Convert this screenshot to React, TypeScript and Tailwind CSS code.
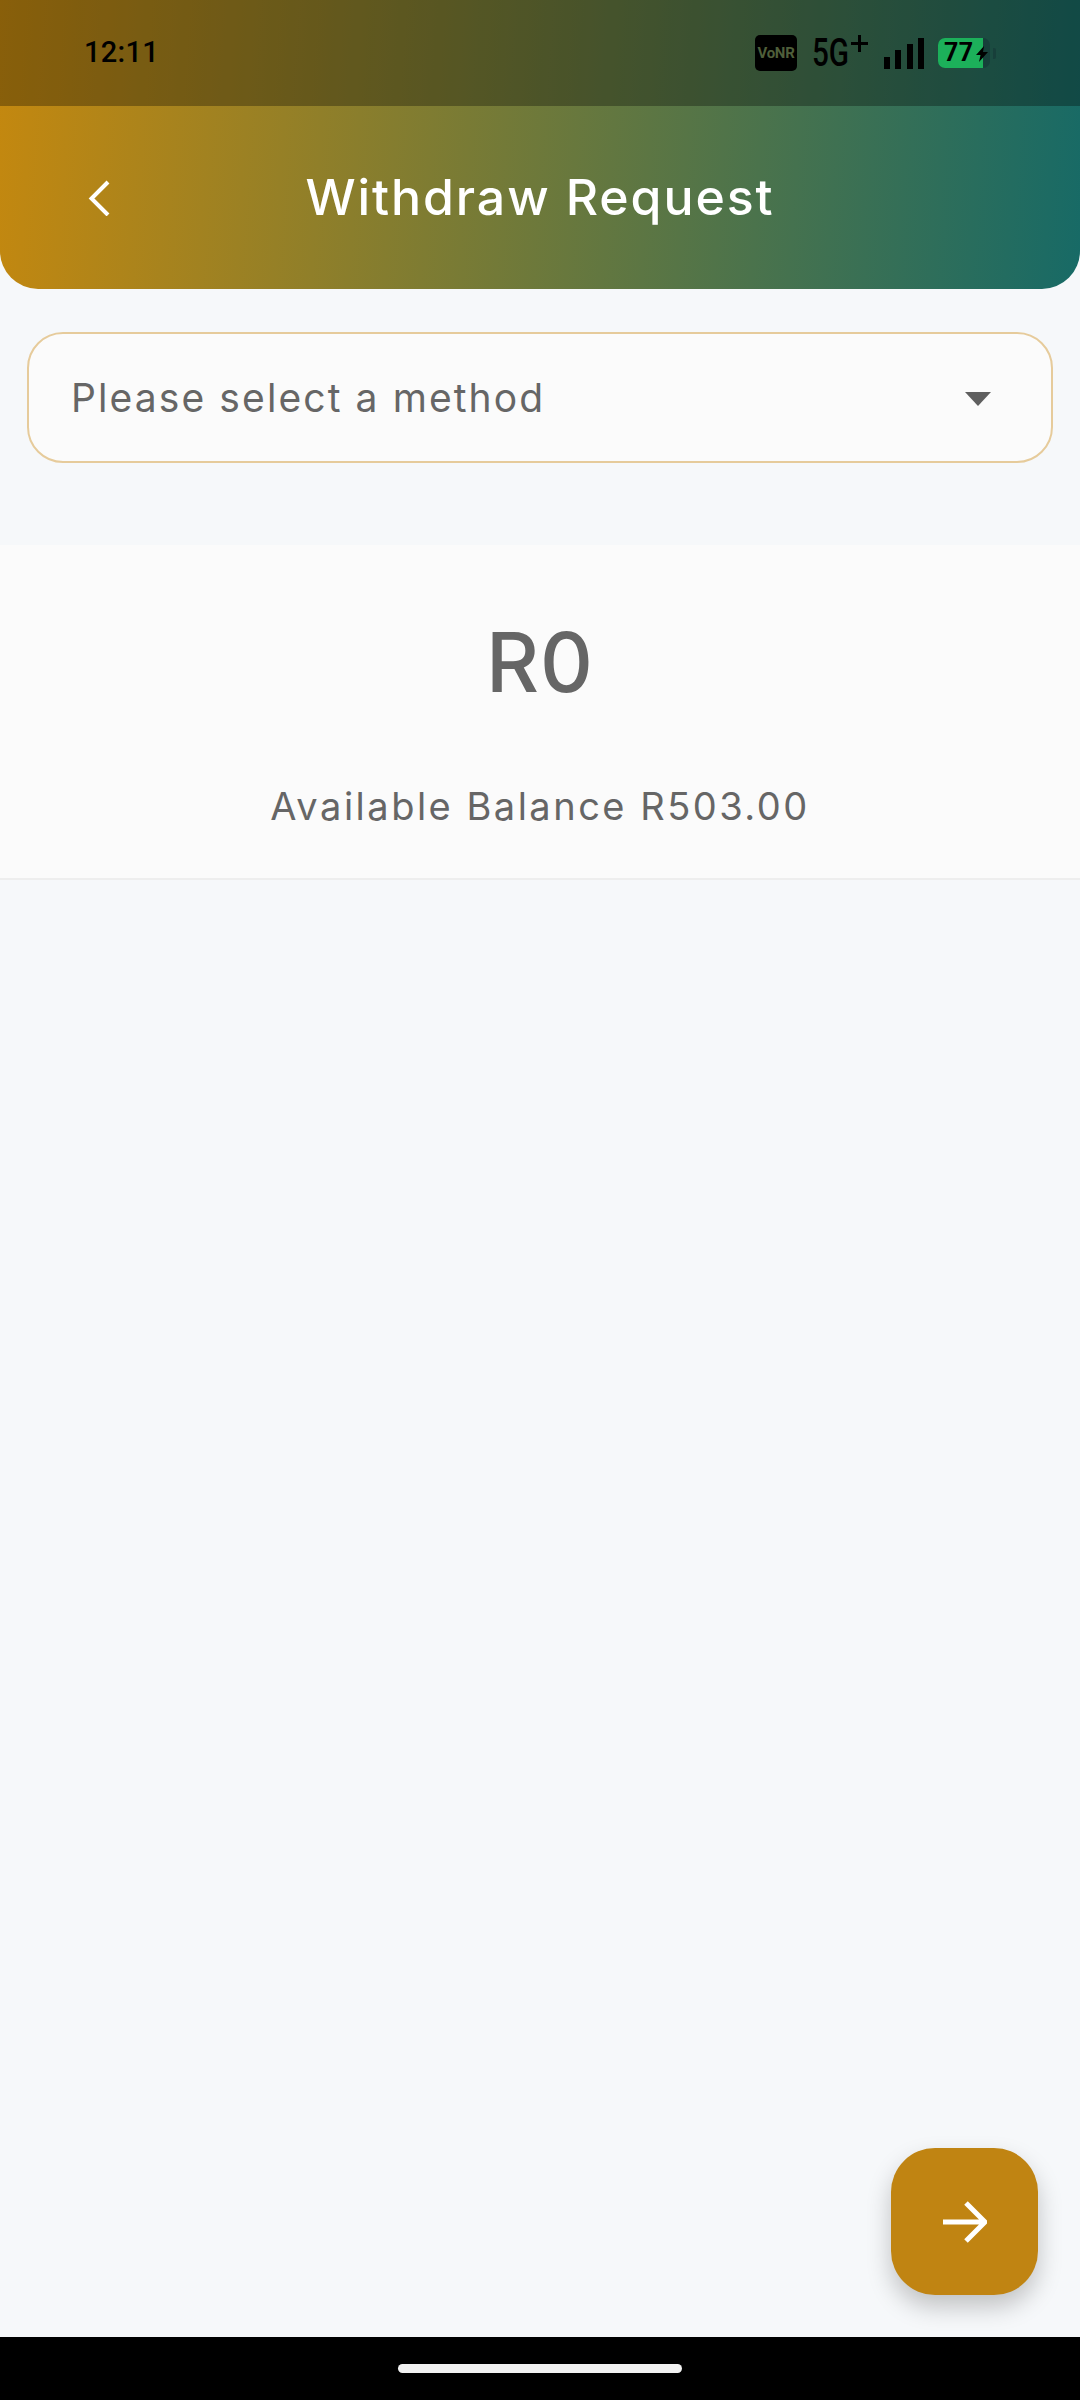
import React from "react";

function StatusIcons() {
  return (
    <div className="flex items-center">
      <div className="w-[42px] h-[36px] bg-black rounded-[5px] flex items-center justify-center text-[15px] font-bold text-[#4f5f3a] font-['Roboto',sans-serif] tracking-[-0.3px]">VoNR</div>
      <div className="relative w-[56px] h-[36px] ml-[15px]">
        <span className="absolute left-0 top-[-1px] text-black text-[38px] leading-[38px] font-medium font-['Roboto',sans-serif] origin-left scale-x-[0.78]">5G</span>
        <svg className="absolute left-[39px] top-[0px]" width="17" height="17" viewBox="0 0 17 17"><path d="M8.5 0v17M0 8.5h17" stroke="#000" strokeWidth="3" /></svg>
      </div>
      <svg className="ml-[16px]" width="40" height="31" viewBox="0 0 40 31">
        <rect x="0" y="19" width="6" height="12" fill="#000" />
        <rect x="11" y="12" width="6" height="19" fill="#000" />
        <rect x="23" y="6" width="6" height="25" fill="#000" />
        <rect x="34" y="0" width="6" height="31" fill="#000" />
      </svg>
      <div className="relative ml-[14px] w-[52px] h-[30px] rounded-[7px] bg-[#173f3a] overflow-hidden">
        <div className="absolute left-0 top-0 bottom-0 w-[45px] bg-[#1cb05a]" />
        <span className="absolute left-[6px] top-[-3px] text-[25px] leading-[36px] font-bold text-black font-['Roboto',sans-serif] tracking-[0.5px]">77</span>
        <svg className="absolute left-[38px] top-[8px]" width="12" height="16" viewBox="0 0 12 16"><path d="M8 0 0 9h4.5L3 16l9-10H7z" fill="#000" /></svg>
      </div>
      <div className="w-[3px] h-[11px] ml-[3px] bg-[#173f3a] rounded-r-[2px]" />
    </div>
  );
}

export default function App() {
  return (
    <div className="relative w-[1080px] h-[2400px] bg-[#f6f8fa] flex flex-col overflow-hidden font-['Inter',sans-serif]">
      <header className="h-[289px] rounded-b-[38px] bg-[linear-gradient(94deg,#c4880f_0%,#176a66_100%)] flex flex-col shrink-0">
        <div className="h-[106px] bg-black/30 flex items-center justify-between pl-[84px] pr-[84px]">
          <span className="text-black text-[29px] font-medium font-['Roboto',sans-serif] tracking-[0.3px]">12:11</span>
          <StatusIcons />
        </div>
        <div className="relative flex-1 flex items-center justify-center pb-[2px]">
          <svg className="absolute left-[86px] top-[74px]" width="24" height="36" viewBox="0 0 24 36" fill="none">
            <path d="M22 2 5.5 18.5 22 35" stroke="#fff" strokeWidth="4" />
          </svg>
          <h1 className="text-white text-[50px] font-medium tracking-[1.9px] leading-none">Withdraw Request</h1>
        </div>
      </header>

      <div className="mx-[27px] mt-[43px] h-[131px] border-[2.5px] border-[#e6cb9b] rounded-[36px] bg-[#fbfbfb] flex items-center justify-between pl-[42px] pr-[60px] pt-[2px] shrink-0">
        <span className="text-[#666666] text-[39px] tracking-[2.1px]">Please select a method</span>
        <svg width="26" height="14" viewBox="0 0 26 14"><path d="M0 0h26L13 14z" fill="#5f5f5f" /></svg>
      </div>

      <section className="mt-[82px] h-[335px] bg-[#fbfbfb] border-b-2 border-[#eeeeee] flex flex-col items-center shrink-0">
        <div className="mt-[76px] text-[#666666] text-[82px] leading-[84px] font-medium tracking-[1px]">R0</div>
        <div className="mt-[76px] text-[#666666] text-[38px] leading-[50px] tracking-[2.5px]">Available Balance R503.00</div>
      </section>

      <div className="flex-1" />

      <div className="flex justify-end pr-[42px] pb-[42px] shrink-0">
        <button className="w-[147px] h-[147px] rounded-[44px] bg-[#c08412] shadow-[0_12px_24px_rgba(0,0,0,0.22)] flex items-center justify-center">
          <svg width="44" height="42" viewBox="0 0 44 42" fill="none">
            <path d="M0 21h40M23 2l19 19-19 19" stroke="#fff" strokeWidth="5" />
          </svg>
        </button>
      </div>

      <nav className="h-[63px] bg-black flex items-center justify-center shrink-0">
        <div className="w-[284px] h-[9px] rounded-full bg-[#f2f2f2]" />
      </nav>
    </div>
  );
}
